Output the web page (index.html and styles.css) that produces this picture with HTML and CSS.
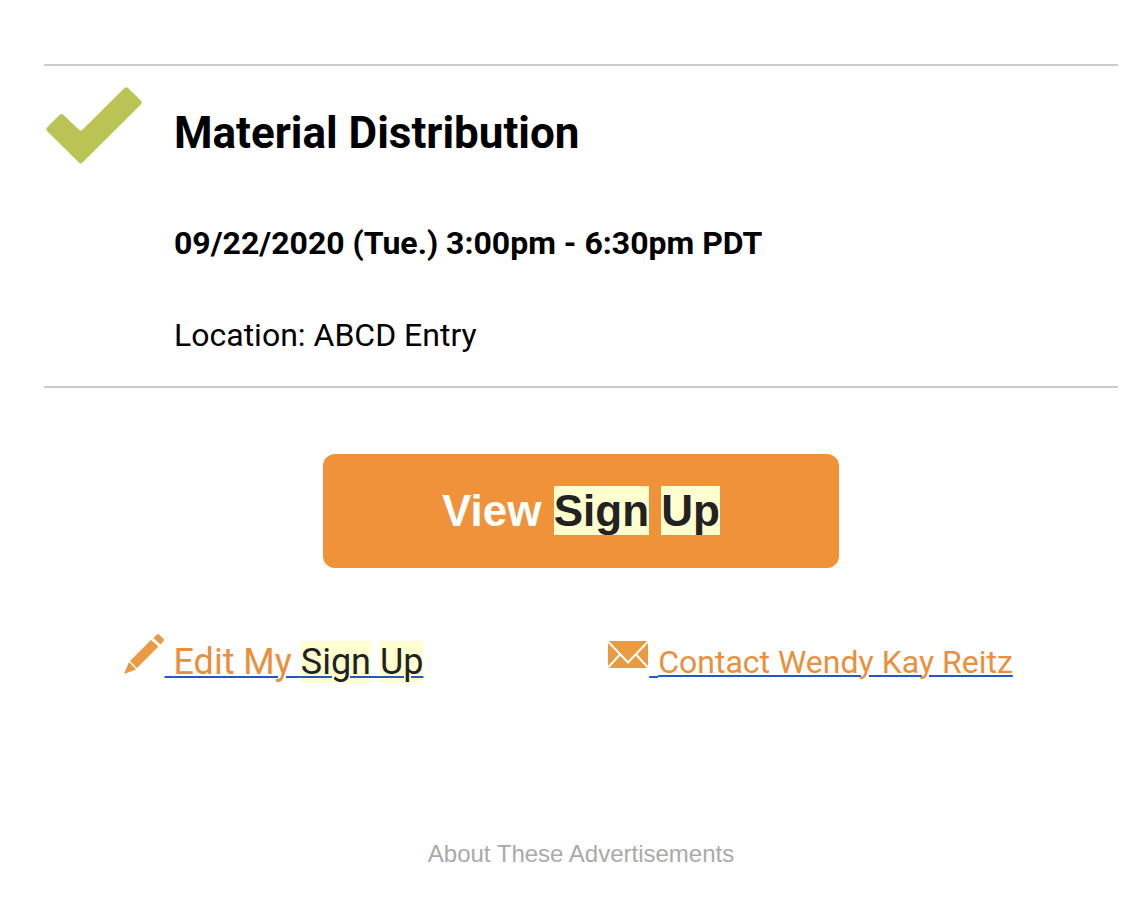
FILE: index.html
```html
<!DOCTYPE html>
<html lang="en">
<head>
    <meta charset="UTF-8">
    <meta name="viewport" content="width=device-width, initial-scale=1.0">
    <title>Material Distribution</title>
    <link rel="stylesheet" href="styles.css">
</head>
<body>
    <main class="email">
        <section class="event">
            <svg class="check" viewBox="0 0 100 80" aria-hidden="true">
                <path d="M3 41.500 L15.500 29 Q17.500 27 19.500 29 L35 43.800 Q36.700 45.400 38.400 43.800 L80.500 2 Q82.300 0.500 84 2 L97 14.700 Q98.800 16.500 97 18.300 L38.500 76.500 Q36.700 78.300 34.900 76.500 L3 45 Q1.300 43.200 3 41.500 Z" fill="#bac455"/>
            </svg>
            <div class="details">
                <h1 class="title">Material Distribution</h1>
                <p class="date">09/22/2020 (Tue.) 3:00pm - 6:30pm PDT</p>
                <p class="location">Location: ABCD Entry</p>
            </div>
        </section>

        <a class="view-button" href="#">View <mark>Sign</mark> <mark>Up</mark></a>

        <div class="links">
            <a class="link" href="#">
                <svg class="icon" viewBox="0 0 40 40" aria-hidden="true">
                    <path d="M0 40 L5 28 L12 35.500 Z M6 27 L27 6 L34.500 12.500 L13 34 Z M29.500 4 L33 0.500 Q34 -0.300 35 0.500 L39.500 5 Q40.500 6 39.500 7 L36.500 10.500 Z" fill="#ea9a40"/>
                </svg><span class="underlined">&nbsp;</span><span class="underlined">Edit My <mark>Sign</mark> <mark>Up</mark></span>
            </a>
            <a class="link" href="#">
                <svg class="icon" viewBox="0 0 40 40" aria-hidden="true">
                    <rect y="7" width="40" height="27" fill="#ea9a40"/>
                    <path d="M0 7.500 L20 28.500 L40 7.500 M0 33.500 L12 20.500 M40 33.500 L28 20.500" fill="none" stroke="#fff" stroke-width="2"/>
                </svg><span class="underlined">&nbsp;</span><span class="underlined small">Contact Wendy Kay Reitz</span>
            </a>
        </div>

        <footer class="footer">
            <a class="ads-link" href="#">About These Advertisements</a>
        </footer>
    </main>
</body>
</html>
```
FILE: styles.css
```css
body {
    margin: 0;
    background-color: #fff;
    color: #000;
    font-family: Roboto, sans-serif;
}

.email {
    display: flex;
    flex-direction: column;
    padding: 64px 8px 36px 44px;
}

.event {
    display: flex;
    align-items: flex-start;
    gap: 30px;
    padding: 20px 0 32px;
    border-top: 2px solid #ccc;
    border-bottom: 2px solid #ccc;
}

.check {
    flex: none;
    width: 100px;
    height: 80px;
}

.details {
    padding-top: 21px;
}

.title {
    margin: 0 0 65px;
    font-size: 44px;
    line-height: 52px;
}

.date,
.location {
    margin: 0;
    font-size: 32px;
    line-height: 38px;
}

.date {
    margin-bottom: 54px;
    font-weight: bold;
}

mark {
    background-color: #ffffd0;
    color: #222;
}

.view-button {
    align-self: center;
    padding: 32px 119px;
    border-radius: 12px;
    background-color: #f09239;
    color: #fff;
    font: bold 44px/50px "Liberation Sans", Arial, sans-serif;
    text-decoration: none;
    margin: 66px 0;
}

.links {
    display: grid;
    grid-template-columns: 1fr 1fr;
}

.link {
    padding-right: 78px;
    color: #ea903c;
    font-size: 36px;
    line-height: 42px;
    text-align: center;
    text-decoration: none;
    white-space: nowrap;
}

.icon {
    width: 40px;
    height: 40px;
    margin-right: 1px;
    vertical-align: baseline;
}

.underlined {
    text-decoration: underline 2px #2457c5;
    text-underline-offset: 2px;
}

.small {
    font-size: 32px;
    vertical-align: text-bottom;
}

.footer {
    margin-top: 157px;
    text-align: center;
}

.ads-link {
    color: #aaa;
    font: 24px/28px "Liberation Sans", Arial, sans-serif;
    text-decoration: none;
}
```
